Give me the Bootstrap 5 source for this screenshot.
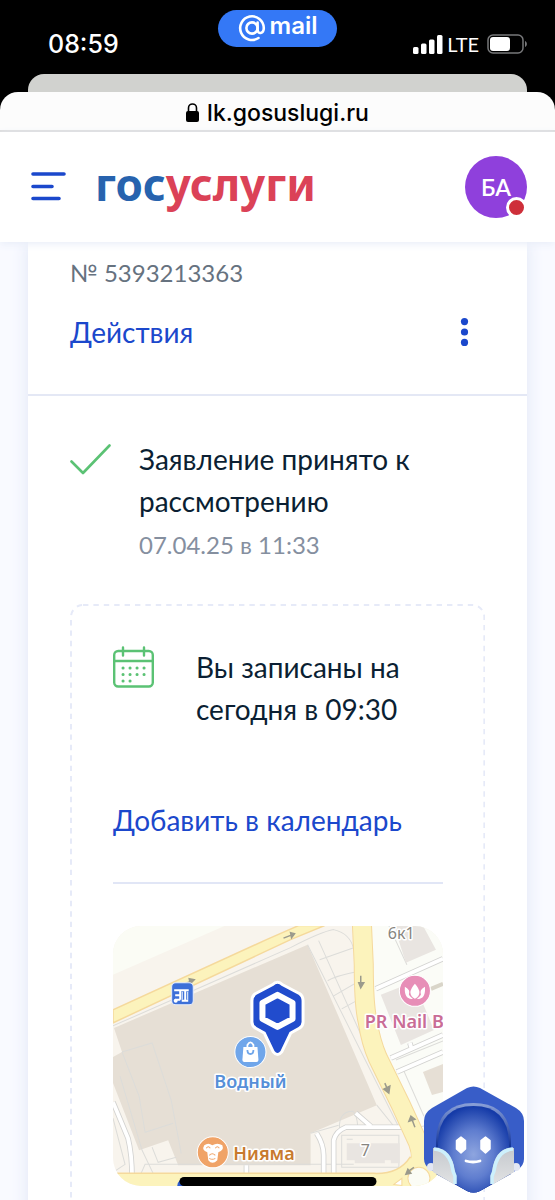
<!DOCTYPE html>
<html lang="ru">
<head>
<meta charset="utf-8">
<meta name="viewport" content="width=device-width, initial-scale=1">
<title>Госуслуги</title>
<link href="https://cdn.jsdelivr.net/npm/bootstrap@5.3.0/dist/css/bootstrap.min.css" rel="stylesheet">
<script src="https://cdn.jsdelivr.net/npm/bootstrap@5.3.0/dist/js/bootstrap.bundle.min.js"></script>
<style>
  body { font-family: Lato, "Open Sans", sans-serif; color: #0b1f33; background: #000; }
  a { color: #1b48cc; text-decoration: none; }
  svg { display: block; flex: none; }
  .ui-font { font-family: Inter, "Liberation Sans", sans-serif; }
  .status-bar { height: 74px; padding: 0 28px; color: #fff; }
  .status-time { font-size: 25px; line-height: 32px; padding-top: 28px; text-indent: 20px; font-weight: 500; }
  .status-net { font-family: Lato, sans-serif; font-size: 20px; line-height: 32px; padding-top: 28px; }
  .side-part { flex: 1 1 0; min-width: 0; }
  .mail-pill { margin-top: 10px; width: 119px; height: 37px; background: #3478f6; font-size: 24px; line-height: 32px; font-weight: 600; }
  .back-sheet { height: 36px; margin: 0 28px -18px; background: #d1d2cf; border-radius: 16px 16px 0 0; }
  .url-bar { height: 40px; padding-top: 3px; background: #fcfcfc; border-bottom: 2px solid #dcdcdc; border-radius: 18px 18px 0 0; color: #000; font-size: 23px; line-height: 36px; font-weight: 500; }
  .site-header { height: 110px; background: #fff; padding: 0 28px 0 31px; box-shadow: 0 2px 8px #e8edf8; }
  .wordmark { font-family: "Noto Sans", sans-serif; font-size: 44px; line-height: 50px; font-weight: 700; color: #2763ae; margin-left: 28px; padding-bottom: 6px; }
  .wordmark span { color: #db4257; }
  .avatar { width: 62px; height: 62px; background: #8f40dc; color: #fff; font-size: 23px; font-weight: 600; }
  .alert-dot { right: 0; bottom: 0; width: 21px; height: 21px; background: #ce2f3a; border: 3px solid #fff; }
  .page-area { background: #f9faff; padding: 0 28px; }
  .order-card { background: #fff; box-shadow: 0 0 16px #dfe6f5; min-height: 100%; }
  .order-head { padding: 13px 42px 41px; border-bottom: 2px solid #e4e8f5; }
  .order-number { font-size: 24px; line-height: 36px; color: #66727f; }
  .order-actions { margin-top: 20px; }
  .body-text { font-size: 28px; line-height: 42px; }
  .order-body { padding: 42px 42px 0; }
  .date-text { font-size: 24px; line-height: 36px; color: #858f9f; margin-top: 5px; }
  .visit-frame { margin-top: 41px; padding: 42px 42px 60px 43px; }
  .frame-line { inset: 0; width: 100%; height: 100%; pointer-events: none; }
  .visit-text { margin-left: 18px; }
  .calendar-link { margin-top: 69px; }
  .divide { height: 2px; background: #e1e6f6; margin: 41px 0 42px; }
  .map-box { height: 260px; border-radius: 28px; }
  .map-text { font-family: "Noto Sans", sans-serif; font-size: 18px; font-weight: 600; paint-order: stroke; stroke: #fff; stroke-width: 3px; stroke-linejoin: round; }
  .house-text { font-size: 16px; font-weight: 400; }
  .helper { right: 31px; bottom: 7px; }
  .home-line { left: 50%; bottom: 14px; width: 197px; height: 9px; background: #000; transform: translateX(-50%); }
</style>
</head>
<body>
<div class="d-flex flex-column vh-100 overflow-hidden position-relative">
  <div class="status-bar ui-font d-flex align-items-start flex-shrink-0">
    <div class="status-time side-part">08:59</div>
    <div class="mail-pill rounded-pill d-flex justify-content-center gap-1 flex-shrink-0">
      <svg width="28" height="28" viewBox="0 0 28 28" class="mt-1" fill="none" stroke="#fff" stroke-width="2.6" stroke-linecap="round"><circle cx="14" cy="14" r="5.6"/><path d="M19.600 8.500V15.500c0 5.200 6.200 4.600 6.200-1.500A11.800 11.800 0 1 0 20.500 24"/></svg>
      <span>mail</span>
    </div>
    <div class="status-net side-part d-flex justify-content-end align-items-center">
      <svg width="30" height="19" viewBox="0 0 30 19" fill="#fff"><rect y="12" width="5.500" height="7" rx="1.500"/><rect x="8" y="8.500" width="5.500" height="10.500" rx="1.500"/><rect x="16" y="4.500" width="5.500" height="14.500" rx="1.500"/><rect x="24" width="5.500" height="19" rx="1.500"/></svg>
      <span class="ms-1 me-2">LTE</span>
      <svg width="40" height="20" viewBox="0 0 40 20"><rect x="1" y="1" width="35" height="18" rx="5" fill="none" stroke="#77787a" stroke-width="1.500"/><rect x="3" y="3" width="20" height="14" rx="3" fill="#fff"/><path d="M38 7c2.500 1 2.500 5 0 6z" fill="#77787a"/></svg>
    </div>
  </div>
  <div class="back-sheet flex-shrink-0"></div>
  <div class="url-bar ui-font d-flex justify-content-center align-items-center gap-2 flex-shrink-0 position-relative">
    <svg width="13" height="19" viewBox="0 0 13 19"><rect y="8" width="13" height="11" rx="2" /><path d="M2.500 9V5a4 4 0 0 1 8 0v4" fill="none" stroke="#000" stroke-width="1.600"/></svg>
    <span>lk.gosuslugi.ru</span>
  </div>
  <header class="site-header d-flex align-items-center flex-shrink-0 position-relative z-1">
    <button class="btn p-0 border-0" type="button" aria-label="Меню">
      <svg width="36" height="32" viewBox="0 0 36 32" stroke="#1b48cc" stroke-width="3.600" stroke-linecap="round"><path d="M2 3h31M2 15.500h19M2 27.500h26"/></svg>
    </button>
    <a href="#" class="wordmark">гос<span>услуги</span></a>
    <button class="avatar btn rounded-circle border-0 p-0 ms-auto position-relative" type="button">БА<span class="alert-dot position-absolute rounded-circle"></span></button>
  </header>
  <main class="page-area flex-grow-1 overflow-hidden">
    <section class="order-card">
      <div class="order-head">
        <div class="order-number">№ 5393213363</div>
        <div class="order-actions d-flex justify-content-between align-items-center body-text">
          <a href="#">Действия</a>
          <button class="btn p-0 border-0 me-3" type="button" aria-label="Ещё">
            <svg width="9" height="28" viewBox="0 0 9 28" fill="#1b48cc"><circle cx="4.500" cy="3.600" r="3.600"/><circle cx="4.500" cy="14" r="3.600"/><circle cx="4.500" cy="24.400" r="3.600"/></svg>
          </button>
        </div>
      </div>
      <div class="order-body">
        <div class="d-flex body-text">
          <svg width="41" height="42" viewBox="0 0 41 42" class="me-4" fill="none" stroke="#5bc274" stroke-width="2.600" stroke-linecap="round" stroke-linejoin="round"><path d="M1.500 23.500L13 35L39.500 7.500"/></svg>
          <div class="ms-1">
            <div>Заявление принято к рассмотрению</div>
            <div class="date-text">07.04.25 в 11:33</div>
          </div>
        </div>
        <div class="visit-frame position-relative">
          <svg class="frame-line position-absolute" aria-hidden="true"><rect x="1" y="1" width="99.600%" height="120%" rx="12" fill="none" stroke="#e6eaf8" stroke-width="2" stroke-dasharray="5.400 5"/></svg>
          <div class="d-flex body-text">
            <svg width="41" height="42" viewBox="0 0 41 42" class="me-4" fill="none" stroke="#5bc274" stroke-width="2.400" stroke-linecap="round"><rect x="1.200" y="5" width="38.600" height="35.500" rx="4"/><path d="M1 15h39M10 1.500v8M31 1.500v8"/><path d="M10 22h.1M17 22h.1M24 22h.1M31 22h.1M10 28.500h.1M17 28.500h.1M24 28.500h.1M31 28.500h.1M10 35h.1M17 35h.1" stroke-width="3"/></svg>
            <div class="visit-text">Вы записаны на сегодня в 09:30</div>
          </div>
          <div class="body-text calendar-link"><a href="#">Добавить в календарь</a></div>
          <div class="divide"></div>
          <div class="map-box overflow-hidden">
            <svg width="100%" height="260" viewBox="0 0 329 260" preserveAspectRatio="xMidYMid slice">
              <rect width="329" height="260" fill="#f8f4ed"/>
              <path d="M0 0H112L0 49z" fill="#fbfcf5"/>
              <path d="M248 0H329V230L305 205L265 130z" fill="#fbfcf7"/>
              <path d="M1 102L194 19L263 179L197 207V239H65L55 214L26 224L0 157V131L9 126z" fill="#e6dfd5"/>
              <g fill="none" stroke="#dcdcd9" stroke-width="1">
                <path d="M0 100L177 22Q208 6 220 4Q237 8 240 24M194 19L285 201M205 15L250 115L293 205M206 34L240 22M214 55Q222 50 243 46M220 70L246 55M228 83L248 72M0 192L12 238L0 246M7 150L29 224L40 247M39 221L45 236L63 231M28 247L32 238H240M9 126L39 117L58 174L68 227M9 126L26 170L32 206L60 197"/>
                <path d="M228 209H285V241H228zM233 213H239M226 205Q224 185 239 185Q243 188 244 200M275 0L293 39M329 115L282 134M263 179L280 200M225 199L197 207M297 203L329 195L315 185M310 207L329 178M290 145L310 190"/>
              </g>
              <g fill="#e9e5e1"><path d="M280 0H309L322 24L292 37zM267 69L300 56L320 104L287 119zM233 217H286V237H277V234H271V237H241V234H233z"/></g>
              <path d="M309 146L329 138V166L318 169z" fill="#e6dfd5"/>
              <path d="M262 63L329 33M277 132L329 109M283 146L329 126M298 124L296 117M0 176L15 212Q19 228 19 252M220 250V214Q222 205 232 201H290M203 207Q210 218 210 229V250M242 187L257 200M133 239V250" fill="none" stroke="#d3d3d1" stroke-width="5.500"/>
              <path d="M262 63L329 33M277 132L329 109M283 146L329 126M298 124L296 117M0 176L15 212Q19 228 19 252M220 250V214Q222 205 232 201H290M203 207Q210 218 210 229V250M242 187L257 200M133 239V250" fill="none" stroke="#fff" stroke-width="3.800"/>
              <path d="M248 -5L250 39Q250 80 254 96Q257 116 264 132L287 179L304 216Q310 232 305 246" fill="none" stroke="#f5d99c" stroke-width="20"/>
              <path d="M0 84L153 14L185 0H211L177 14L0 97z" fill="#fcf3bc" stroke="#f5d99c" stroke-width="1.500"/>
              <path d="M-2 247H260Q285 248 296 231L325 236L329 262H-2z" fill="#fcf3bc" stroke="#f5d99c" stroke-width="1.500"/>
              <path d="M248 -5L250 39Q250 80 254 96Q257 116 264 132L287 179L304 216Q310 232 303 246" fill="none" stroke="#fcf3bc" stroke-width="18"/>
              <circle cx="305" cy="252" r="11" fill="#fbfcf5" stroke="#f5d99c"/>
              <path d="M280 258L288 252V259z" fill="#fff" stroke="#f5d99c"/>
              <g fill="#9b9a8c" stroke="#9b9a8c" stroke-width="1.500">
                <path d="M170 12.500L179 9M177 7L181 8L178 12zM72 58L79 55M76 53L81 54L77 58zM247 50V60M245 57H250L247 62zM271 157L274 164M270 163L276 160L275 167zM301 201L298 193M295 195L297 190L301 193zM300 241L293 246M294 243L292 248L297 247z"/>
                <path d="M317 63L329 58" stroke="#d9d5c9" stroke-width="4"/>
              </g>
              <rect x="58.500" y="57" width="21.500" height="22" rx="4" fill="#3d70d8" stroke="#e8eefb"/>
              <path d="M61 64.500H75.500M62 69.500H67M67 64V74M62 74H67M72 64V75M68.500 75H75" fill="none" stroke="#fff" stroke-width="2"/><path d="M69 66V74M74.500 66V74" stroke="#fff"/><circle cx="62.500" cy="75" r="2" fill="#fff"/>
              <circle cx="137" cy="126" r="15.500" fill="#70a6ea" stroke="#fff" stroke-width="1"/>
              <path d="M130 121H144L145 134Q145 136 143 136H131Q129 136 129 134z" fill="#fff"/><path d="M134 121V119Q137 114 140 119V121" fill="none" stroke="#fff" stroke-width="1.800"/><path d="M134 124Q134 128 137 128T140 124" fill="none" stroke="#70a6ea" stroke-width="1.800"/>
              <circle cx="301" cy="65" r="15.500" fill="#e78eb7" stroke="#fff"/>
              <path d="M301 58Q310 68 301 73Q292 68 301 58z" fill="#fff"/>
              <path d="M291 61Q297 64 295 69Q297 72 299 73Q290 74 291 61zM311 61Q305 64 307 69Q305 72 303 73Q312 74 311 61z" fill="#fff"/>
              <circle cx="99.500" cy="226" r="15.500" fill="#f0a367" stroke="#fff"/>
              <path d="M91 219Q95 216 99 219Q104 216 109 219Q111 224 105 226L104 234Q99 239 95 234L94 226Q88 224 91 219z" fill="#fff"/><path d="M93 222Q95 219 97 222M102 222Q104 219 106 222M96 229Q99 226 102 229M96 232Q99 234 102 232" fill="none" stroke="#f0a367"/>
              <path d="M164 58Q166 58 168 60L185 69Q188 71 188 75V96Q188 99 185 101L176 106L167 125Q164 129 161 125L152 106L143 101Q140 99 140 96V75Q140 71 143 69L160 60Q162 58 164 58z" fill="#214ccd" stroke="#fff" stroke-width="6" paint-order="stroke" stroke-linejoin="round"/>
              <path d="M164 69L179 77V93L164 101L149 93V77z" fill="#214ccd" stroke="#fff" stroke-width="6" stroke-linejoin="round"/>
              <text class="map-text" x="137" y="162" text-anchor="middle" fill="#568fd8">Водный</text>
              <text class="map-text" x="120" y="234" fill="#c87a2e">Нияма</text>
              <text class="map-text" x="251" y="102" fill="#c96d96">PR Nail B</text>
              <text class="map-text house-text" x="274" y="13" fill="#87857f">6к1</text>
              <text class="map-text house-text" x="247" y="230" fill="#87857f">7</text>
              <path d="M64 260Q65 252 72 252V260z" fill="#2b5bd0"/>
            </svg>
          </div>
        </div>
      </div>
    </section>
  </main>
  <a href="#" class="helper position-absolute z-2" aria-label="Робот Макс">
    <svg width="100" height="107" viewBox="0 0 100 107">
      <defs>
        <radialGradient id="face" cx="50%" cy="56%" r="56%"><stop offset="0" stop-color="#8ea5df"/><stop offset=".5" stop-color="#5f7dcf"/><stop offset="1" stop-color="#153ba8"/></radialGradient>
        <linearGradient id="rim" x1="0" y1="0" x2="0" y2="1"><stop offset="0" stop-color="#8ba1d8"/><stop offset=".5" stop-color="#0e3096"/></linearGradient>
        <linearGradient id="ear" x1="0" y1="0" x2="0" y2="1"><stop offset="0" stop-color="#c5c9ce"/><stop offset="1" stop-color="#e2e3e4"/></linearGradient>
      </defs>
      <path d="M43 2Q49.500-1 56 2L92 22Q100 27 100 35V73Q100 80 93 84L56 105Q49.500 108 43 105L7 84Q0 80 0 73V35Q0 27 8 22z" fill="#385dc8"/>
      <circle cx="7" cy="81" r="4" fill="#e3e7f3"/><circle cx="92" cy="81" r="4" fill="#e3e7f3"/>
      <path d="M12 65V55Q13 17 49.500 17T87 55V88L56 105Q49.500 108 43 105L12 88z" fill="url(#rim)"/>
      <path d="M14 65V57Q15 20 49.500 20T85 57V88L56 105Q49.500 108 43 105L14 88z" fill="url(#face)"/>
      <path d="M9 62Q28 61 31 86V99L9 86z" fill="url(#ear)"/><path d="M10 63Q26 64 29 85L31 90V98" fill="none" stroke="#cdf0fc" stroke-width="3.500"/>
      <path d="M90 62Q71 61 68 86V99L90 86z" fill="url(#ear)"/><path d="M89 63Q73 64 70 85L68 90V98" fill="none" stroke="#cdf0fc" stroke-width="3.500"/>
      <path d="M37 51L41.500 54.500V63L37 67L32.500 63V54.500zM61.500 51L66 54.500V63L61.500 67L57 63V54.500z" fill="#fff" stroke="#fff" stroke-width="1.500" stroke-linejoin="round"/>
      <path d="M42 75Q49 77 56 75" fill="none" stroke="#fff" stroke-width="2.800" stroke-linecap="round"/>
    </svg>
  </a>
  <div class="home-line position-absolute rounded-pill z-3"></div>
</div>
</body>
</html>
